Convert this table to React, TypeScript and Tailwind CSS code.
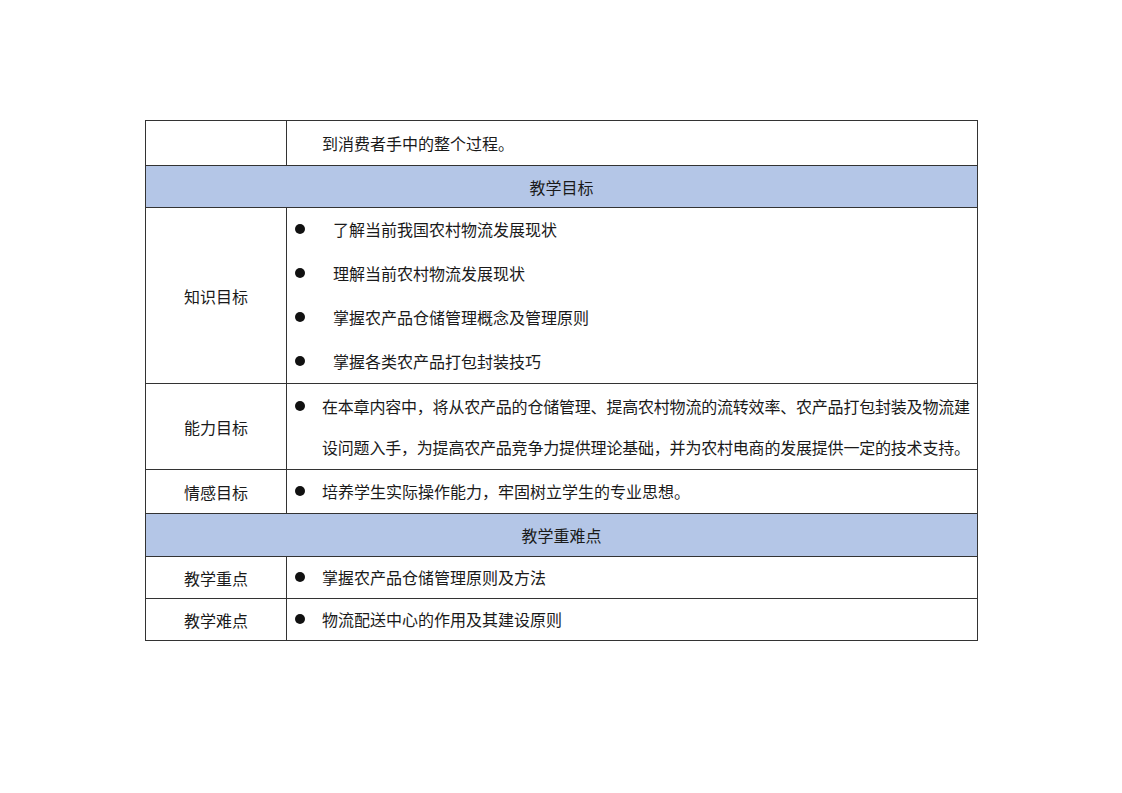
const font = { fontFamily: '"Noto Sans CJK SC", "Noto Sans", sans-serif' };

function Bullet() {
  return <span className="inline-block w-[10px] h-[10px] rounded-full bg-[#111] shrink-0" />;
}

function BulletRow({ text, indent }: { text: string; indent?: boolean }) {
  return (
    <div className="flex items-center h-[44px] pb-[1px]">
      <div className="w-[26px] pl-[8px] flex items-center">
        <Bullet />
      </div>
      <span className={indent ? 'pl-[20px]' : 'pl-[9px]'}>{text}</span>
    </div>
  );
}

function HeaderRow({ title, h }: { title: string; h: string }) {
  return (
    <div className={`flex items-center justify-center bg-[#b4c6e7] border-b border-[#333] ${h}`}>
      {title}
    </div>
  );
}

function LabelRow({ label, children, h }: { label: string; children: React.ReactNode; h: string }) {
  return (
    <div className={`flex border-b border-[#333] ${h}`}>
      <div className="w-[141px] shrink-0 border-r border-[#333] flex items-center justify-center">
        {label}
      </div>
      <div className="flex-1 flex flex-col justify-center">{children}</div>
    </div>
  );
}

export default function App() {
  const knowledge = [
    '了解当前我国农村物流发展现状',
    '理解当前农村物流发展现状',
    '掌握农产品仓储管理概念及管理原则',
    '掌握各类农产品打包封装技巧',
  ];

  return (
    <div className="w-[1122px] h-[793px] bg-white text-[#1a1a1a] text-[16px]" style={font}>
      <div className="pt-[120px] pl-[145px]">
        <div className="w-[833px] border-t border-l border-r border-[#333]">
          <LabelRow label="" h="h-[45px]">
            <div className="pl-[35px]">到消费者手中的整个过程。</div>
          </LabelRow>

          <HeaderRow title="教学目标" h="h-[42px]" />

          <LabelRow label="知识目标" h="h-[176px]">
            {knowledge.map((k) => (
              <BulletRow key={k} text={k} indent />
            ))}
          </LabelRow>

          <LabelRow label="能力目标" h="h-[86px]">
            <div className="flex leading-[41px]">
              <div className="w-[26px] pl-[8px] h-[41px] flex items-center shrink-0">
                <Bullet />
              </div>
              <div className="pl-[9px] tracking-[-0.2px]">
                在本章内容中，将从农产品的仓储管理、提高农村物流的流转效率、农产品打包封装及物流建设问题入手，为提高农产品竞争力提供理论基础，并为农村电商的发展提供一定的技术支持。
              </div>
            </div>
          </LabelRow>

          <LabelRow label="情感目标" h="h-[44px]">
            <BulletRow text="培养学生实际操作能力，牢固树立学生的专业思想。" />
          </LabelRow>

          <HeaderRow title="教学重难点" h="h-[43px]" />

          <LabelRow label="教学重点" h="h-[42px]">
            <BulletRow text="掌握农产品仓储管理原则及方法" />
          </LabelRow>

          <LabelRow label="教学难点" h="h-[42px]">
            <BulletRow text="物流配送中心的作用及其建设原则" />
          </LabelRow>
        </div>
      </div>
    </div>
  );
}
